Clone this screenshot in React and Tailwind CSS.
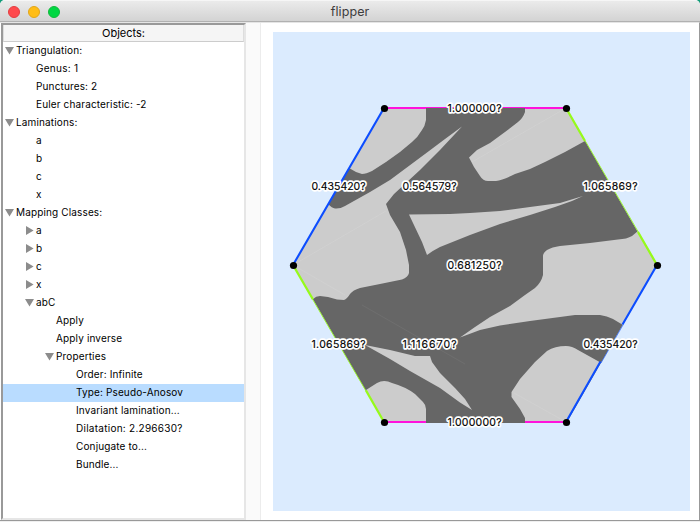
const rows = [
  { depth: 0, text: 'Triangulation:', open: true },
  { depth: 1, text: 'Genus: 1', loose: true },
  { depth: 1, text: 'Punctures: 2' },
  { depth: 1, text: 'Euler characteristic: -2' },
  { depth: 0, text: 'Laminations:', open: true },
  { depth: 1, text: 'a' },
  { depth: 1, text: 'b' },
  { depth: 1, text: 'c' },
  { depth: 1, text: 'x' },
  { depth: 0, text: 'Mapping Classes:', open: true },
  { depth: 1, text: 'a', open: false },
  { depth: 1, text: 'b', open: false },
  { depth: 1, text: 'c', open: false },
  { depth: 1, text: 'x', open: false },
  { depth: 1, text: 'abC', open: true },
  { depth: 2, text: 'Apply' },
  { depth: 2, text: 'Apply inverse' },
  { depth: 2, text: 'Properties', open: true },
  { depth: 3, text: 'Order: Infinite' },
  { depth: 3, text: 'Type: Pseudo-Anosov', selected: true },
  { depth: 3, text: 'Invariant lamination...' },
  { depth: 3, text: 'Dilatation: 2.296630?', loose: true },
  { depth: 3, text: 'Conjugate to...' },
  { depth: 3, text: 'Bundle...' },
];

const indents = ['pl-[2px]', 'pl-[22px]', 'pl-[42px]', 'pl-[62px]'];

function Arrow({ open }) {
  return (
    <svg width="11" height="18" viewBox="0 0 11 18" className="shrink-0 fill-[#8c8c8c]">
      {open === true && <path d="M0 5H9L4.5 12.4Z" />}
      {open === false && <path d="M1 4L8.6 8.5L1 13Z" />}
    </svg>
  );
}

function Row({ row }) {
  return (
    <div className={`flex h-[18px] shrink-0 items-center ${indents[row.depth]} ${row.selected ? 'bg-[#b9dcff]' : ''}`}>
      <Arrow open={row.open} />
      <span className={`whitespace-pre pb-0.5 text-[10px] leading-4 ${row.loose ? 'tracking-[0.26px]' : 'tracking-[0.14px]'}`}>{row.text}</span>
    </div>
  );
}

// Complementary regions of the invariant lamination
const regions = [
  'M384 108H426V120Q425 126 422 130Q418 137 412 142L400 152L386 162L372 171Q366 174 362 174L356 172L349 168Z',
  'M328 204Q332 208 335 208.500Q340 209 345 206L370 192L390 180L425 154L445 139L462 126.500L440 150L420 170L394 194L386 204L390 215L400 232L406 250L409 265V273Q408 277 402 279.500L380 284L360 288Q353 290 350 294Q347 299 344 300L337 299.500L328 297L320 296Q316 296 313 299L293 265Z',
  'M525 108V112Q523 118 518 122L505 132L490 143L477 150L469 157.500L474 167L480 176Q483 181 488 181H496Q503 180 515 174L530 169L545 162L565 152L585 141L566 108Z',
  'M409 214.500L450 214L470 213L500 211L530 207L560 203L583 196L572 201L555 207L530 215L500 224L470 235L440 247Q432 251 427 255L422 242L413 223Z',
  'M638 231L632 236Q627 239 618 239.500L590 243L560 246Q552 247 547 250Q543 253 543 256V275Q541 283 535 288L525 295L510 306L490 317L475 327L460 337.500L480 330L500 325.500L530 321L575 315H600Q607 316 613 319L623 325L657 265Z',
  'M365 345L390 350L415 356H430L432 362L440 373L455 388L465 399L472 410L460 402.500L440 388L410 371L390 359Z',
  'M366 390L377 383Q384 379 392 383Q406 387 415 394L423 402Q426 405 426 409V422H384Z',
  'M566 422H525V418L520 409L511.500 397V392L520 379L535 362L547 351Q555 346 566 346Q572 346 578 350L600.500 362.500L566 422Z',
];

const labels = [
  [447.500, 112, '1.000000?'],
  [311.500, 190, '0.435420?'],
  [402.500, 190, '0.564579?'],
  [583.500, 190, '1.065869?'],
  [447.500, 269, '0.681250?'],
  [311.500, 348, '1.065869?'],
  [402.500, 348, '1.116670?'],
  [583.500, 348, '0.435420?'],
  [447.500, 426, '1.000000?'],
];

const vertices = [[384, 108], [566, 108], [657, 265], [566, 422], [384, 422], [293, 265]];

function Labels() {
  return labels.map(([x, y, t]) => (
    <text key={`${x}-${y}`} x={x} y={y} textLength="54">{t}</text>
  ));
}

function Surface() {
  return (
    <svg width="417" height="479" viewBox="273 32 417 479" className="block">
      <path d="M384 108H566L657 265L566.500 423H384.500L293 265Z" fill="#666" />
      {regions.map((d) => <path key={d} d={d} fill="#ccc" />)}
      <g stroke="#d3d3d3" strokeWidth="0.6">
        <path d="M293 265L386 211M293 265L345 295M472 162L566 108M514 393L566 422" />
        <path d="M362 305L465 364" stroke="#737373" />
      </g>
      <g fill="none" strokeWidth="2.1">
        <path d="M384 108H426M525 108H566M384 422H426M525 422H566" stroke="#ff12dc" strokeWidth="2" />
        <path d="M426 107.500H525" stroke="#ff12dc" strokeWidth="1" />
        <path d="M384 108L293 265M657 265L622.500 324.500M600.500 361.500L566 422" stroke="#0c4dff" />
        <path d="M623 325L601 363" stroke="#0c4dff" strokeWidth="0.6" />
        <path d="M566 108L585 141M638 232L657 265M293 265L313 299.500M366 390.500L384 422" stroke="#96fa1b" strokeWidth="2.300" />
        <path d="M585.300 141L638.300 232M313 300L366 391" stroke="#96fa1b" strokeWidth="0.9" />
      </g>
      {vertices.map(([x, y]) => <circle key={`${x}-${y}`} cx={x + 0.5} cy={y + 0.5} r="3.6" />)}
      <g fontSize="10.5" stroke="#fff" strokeWidth="3.400" strokeLinejoin="round" fill="#fff" aria-hidden="true"><Labels /></g>
      <g fontSize="10.5" stroke="#000" strokeWidth="0.15"><Labels /></g>
    </svg>
  );
}

export default function App() {
  return (
    <div className="h-[522px] w-[700px] overflow-hidden bg-[#119b78] font-['Inter','Liberation_Sans',sans-serif] text-black">
      <div className="flex h-full flex-col overflow-hidden rounded-t-[5px] bg-white">
        <header className="grid h-[22px] shrink-0 grid-cols-[1fr_auto_1fr] items-center border-t border-b border-t-[#f6f6f6] border-b-[#b1b1b1] bg-linear-to-b from-[#ebebeb] to-[#d3d3d3] px-2">
          <div className="flex gap-2">
            <i className="size-3 rounded-full border border-[#e33e41] bg-[#ff4a4d]" />
            <i className="size-3 rounded-full border border-[#e2a619] bg-[#ffbd16]" />
            <i className="size-3 rounded-full border border-[#12b83c] bg-[#00d742]" />
          </div>
          <h1 className="pt-px text-[12.5px] leading-5 tracking-[0.1px] text-[#3e3e3e]">flipper</h1>
        </header>
        <main className="flex h-[499px] shrink-0 border-t border-r border-b border-t-[#e5e5e5] border-r-[#999] border-b-[#999]">
          <aside className="ml-px flex w-[245px] shrink-0 flex-col border-t-2 border-r-2 border-b-2 border-l-2 border-t-[#999] border-r-[#e6e6e6] border-b-[#e6e6e6] border-l-[#999]">
            <div className="flex h-[17px] shrink-0 items-center justify-center border-x border-b border-x-[#ddd] border-b-[#ccc] bg-[#f5f5f5] text-[11px] leading-4">Objects:</div>
            {rows.map((row, i) => <Row key={i} row={row} />)}
          </aside>
          <section className="flex flex-1 bg-[#fafafa] pl-[14px]">
            <div className="flex-1 border-l border-[#ececec] bg-white pt-[9px] pl-3">
              <div className="h-[479px] w-[417px] bg-[#dbebfe]">
                <Surface />
              </div>
            </div>
          </section>
        </main>
        <div className="h-px shrink-0 bg-[#efefef]" />
      </div>
    </div>
  );
}
